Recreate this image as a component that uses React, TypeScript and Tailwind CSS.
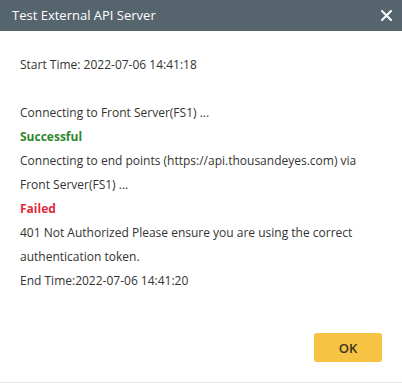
import React from "react";

export default function App() {
  return (
    <div className="w-[402px] h-[383px] bg-white flex flex-col overflow-hidden border-b border-[#e4e4e4]" style={{ fontFamily: '"Open Sans", "Noto Sans", sans-serif' }}>
      <div className="h-[31px] bg-[#56646e] flex items-center justify-between pl-[12px] pr-[10px] shrink-0">
        <span className="text-[13px] text-white">Test External API Server</span>
        <svg width="11" height="11" viewBox="0 0 11 11" className="text-white">
          <path d="M1 1L10 10M10 1L1 10" stroke="currentColor" strokeWidth="2" strokeLinecap="round" />
        </svg>
      </div>
      <div className="flex-1 flex flex-col px-[20px] pt-[22px] text-[12px] leading-[24px] text-[#333]">
        <div>Start Time: 2022-07-06 14:41:18</div>
        <div className="h-[24px]" />
        <div>Connecting to Front Server(FS1) ...</div>
        <div className="font-bold text-[#2f8a2f]">Successful</div>
        <div>Connecting to end points (https://api.thousandeyes.com) via Front Server(FS1) ...</div>
        <div className="font-bold text-[#e02a3a]">Failed</div>
        <div>401 Not Authorized Please ensure you are using the correct authentication token.</div>
        <div>End Time:2022-07-06 14:41:20</div>
        <div className="flex justify-end mt-[40px]">
          <button className="w-[68px] h-[29px] rounded-[3px] bg-[#f6c343] text-[#3a3320] text-[13px] font-semibold">OK</button>
        </div>
      </div>
    </div>
  );
}
